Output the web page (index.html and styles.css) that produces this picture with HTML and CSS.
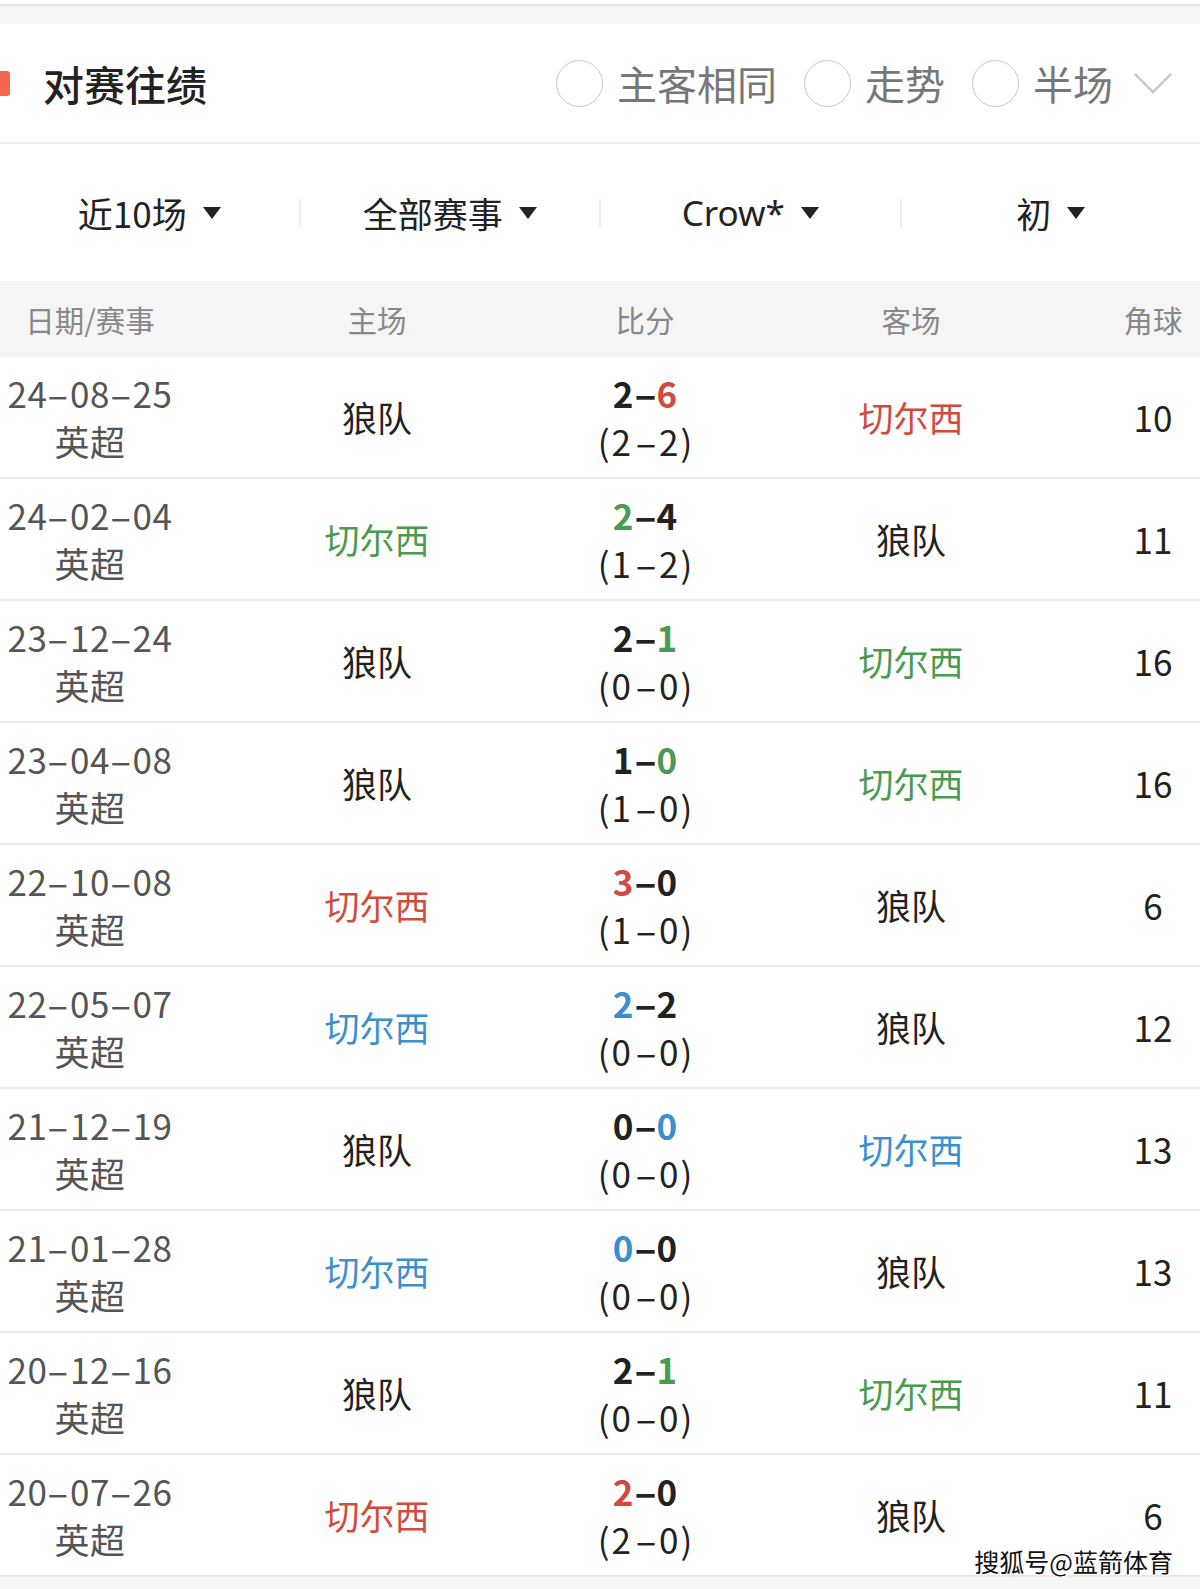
FILE: index.html
```html
<!DOCTYPE html>
<html lang="zh-CN">
<head>
<meta charset="utf-8">
<title>对赛往绩</title>
<link rel="stylesheet" href="styles.css">
</head>
<body>
<div class="page">
  <div class="topbar"></div>

  <header class="section-head">
    <div class="title-wrap">
      <span class="title-mark"></span>
      <h2 class="title">对赛往绩</h2>
    </div>
    <div class="options">
      <span class="radio"></span><span class="opt-label">主客相同</span>
      <span class="radio"></span><span class="opt-label">走势</span>
      <span class="radio"></span><span class="opt-label">半场</span>
      <svg class="chevron" width="40" height="24" viewBox="0 0 40 24"><polyline points="2,3 20,21 38,3" fill="none" stroke="#c4c4c4" stroke-width="2.4"/></svg>
    </div>
  </header>

  <div class="filters">
    <div class="filter">近10场<span class="caret"></span></div>
    <span class="fsep"></span>
    <div class="filter">全部赛事<span class="caret"></span></div>
    <span class="fsep"></span>
    <div class="filter latin">Crow*<span class="caret"></span></div>
    <span class="fsep"></span>
    <div class="filter">初<span class="caret"></span></div>
  </div>

  <div class="thead grid">
    <div>日期/赛事</div>
    <div>主场</div>
    <div>比分</div>
    <div>客场</div>
    <div>角球</div>
  </div>

  <div class="row grid">
    <div class="date"><div>24<span class="d">-</span>08<span class="d">-</span>25</div><div>英超</div></div>
    <div class="team">狼队</div>
    <div class="score"><div class="ft">2<span class="d">-</span><span class="red">6</span></div><div class="ht">(2<span class="d">-</span>2)</div></div>
    <div class="team red">切尔西</div>
    <div class="corner">10</div>
  </div>
  <div class="row grid">
    <div class="date"><div>24<span class="d">-</span>02<span class="d">-</span>04</div><div>英超</div></div>
    <div class="team green">切尔西</div>
    <div class="score"><div class="ft"><span class="green">2</span><span class="d">-</span>4</div><div class="ht">(1<span class="d">-</span>2)</div></div>
    <div class="team">狼队</div>
    <div class="corner">11</div>
  </div>
  <div class="row grid">
    <div class="date"><div>23<span class="d">-</span>12<span class="d">-</span>24</div><div>英超</div></div>
    <div class="team">狼队</div>
    <div class="score"><div class="ft">2<span class="d">-</span><span class="green">1</span></div><div class="ht">(0<span class="d">-</span>0)</div></div>
    <div class="team green">切尔西</div>
    <div class="corner">16</div>
  </div>
  <div class="row grid">
    <div class="date"><div>23<span class="d">-</span>04<span class="d">-</span>08</div><div>英超</div></div>
    <div class="team">狼队</div>
    <div class="score"><div class="ft">1<span class="d">-</span><span class="green">0</span></div><div class="ht">(1<span class="d">-</span>0)</div></div>
    <div class="team green">切尔西</div>
    <div class="corner">16</div>
  </div>
  <div class="row grid">
    <div class="date"><div>22<span class="d">-</span>10<span class="d">-</span>08</div><div>英超</div></div>
    <div class="team red">切尔西</div>
    <div class="score"><div class="ft"><span class="red">3</span><span class="d">-</span>0</div><div class="ht">(1<span class="d">-</span>0)</div></div>
    <div class="team">狼队</div>
    <div class="corner">6</div>
  </div>
  <div class="row grid">
    <div class="date"><div>22<span class="d">-</span>05<span class="d">-</span>07</div><div>英超</div></div>
    <div class="team blue">切尔西</div>
    <div class="score"><div class="ft"><span class="blue">2</span><span class="d">-</span>2</div><div class="ht">(0<span class="d">-</span>0)</div></div>
    <div class="team">狼队</div>
    <div class="corner">12</div>
  </div>
  <div class="row grid">
    <div class="date"><div>21<span class="d">-</span>12<span class="d">-</span>19</div><div>英超</div></div>
    <div class="team">狼队</div>
    <div class="score"><div class="ft">0<span class="d">-</span><span class="blue">0</span></div><div class="ht">(0<span class="d">-</span>0)</div></div>
    <div class="team blue">切尔西</div>
    <div class="corner">13</div>
  </div>
  <div class="row grid">
    <div class="date"><div>21<span class="d">-</span>01<span class="d">-</span>28</div><div>英超</div></div>
    <div class="team blue">切尔西</div>
    <div class="score"><div class="ft"><span class="blue">0</span><span class="d">-</span>0</div><div class="ht">(0<span class="d">-</span>0)</div></div>
    <div class="team">狼队</div>
    <div class="corner">13</div>
  </div>
  <div class="row grid">
    <div class="date"><div>20<span class="d">-</span>12<span class="d">-</span>16</div><div>英超</div></div>
    <div class="team">狼队</div>
    <div class="score"><div class="ft">2<span class="d">-</span><span class="green">1</span></div><div class="ht">(0<span class="d">-</span>0)</div></div>
    <div class="team green">切尔西</div>
    <div class="corner">11</div>
  </div>
  <div class="row grid last">
    <div class="date"><div>20<span class="d">-</span>07<span class="d">-</span>26</div><div>英超</div></div>
    <div class="team red">切尔西</div>
    <div class="score"><div class="ft"><span class="red">2</span><span class="d">-</span>0</div><div class="ht">(2<span class="d">-</span>0)</div></div>
    <div class="team">狼队</div>
    <div class="corner">6</div>
    <span class="watermark">搜狐号@蓝箭体育</span>
  </div>

  <div class="bottombar"></div>
</div>
</body>
</html>
```

FILE: styles.css
```css
* { box-sizing: border-box; }

html, body {
  margin: 0;
  padding: 0;
  background: #ffffff;
}

body {
  font-family: "Noto Sans CJK SC", "Noto Sans", sans-serif;
  color: #222222;
}

.page {
  width: 1200px;
  background: #ffffff;
}

.topbar {
  margin-top: 4px;
  height: 20px;
  border-top: 2px solid #e8e8e8;
  background: #f5f5f5;
}

.section-head {
  height: 120px;
  border-bottom: 2px solid #eeeeee;
  display: flex;
  align-items: center;
  justify-content: space-between;
  padding-right: 27px;
}

.title-wrap {
  display: flex;
  align-items: center;
}

.title-mark {
  width: 10px;
  height: 25px;
  background: #f2674e;
  border-radius: 0 3px 3px 0;
}

.title {
  margin: 0 0 0 33px;
  font-size: 41px;
  font-weight: 500;
  line-height: 1;
  color: #222222;
}

.options {
  display: flex;
  align-items: center;
}

.radio {
  width: 47px;
  height: 47px;
  border: 1.5px solid #c8c8c8;
  border-radius: 50%;
  margin-right: 14px;
}

.opt-label {
  font-size: 40px;
  line-height: 1;
  color: #777777;
  margin-right: 27px;
}

.opt-label:last-of-type {
  margin-right: 20px;
}

.chevron {
  display: block;
}

.filters {
  height: 137px;
  display: flex;
  align-items: center;
}

.filter {
  flex: 1;
  display: flex;
  align-items: center;
  justify-content: center;
  font-size: 35px;
  line-height: 1;
  color: #222222;
}

.filter.latin {
  font-family: "Noto Sans", "Noto Sans CJK SC", sans-serif;
}

.caret {
  width: 0;
  height: 0;
  border-left: 9px solid transparent;
  border-right: 9px solid transparent;
  border-top: 12px solid #222222;
  margin-left: 16px;
}

.fsep {
  width: 2px;
  height: 28px;
  background: #eeeeee;
}

.grid {
  display: grid;
  grid-template-columns: 180px 394px 142px 390px 94px;
  align-items: center;
  text-align: center;
}

.thead {
  height: 76px;
  background: #f5f5f5;
  font-size: 29.5px;
  color: #888888;
}

.row {
  position: relative;
  height: 122px;
  border-bottom: 2px solid #ececec;
  font-size: 35px;
  line-height: 48px;
}

.row.last {
  border-bottom: 2px solid #e6e6e6;
}

.d {
  display: inline-block;
  margin: 0 5px;
  transform: scaleX(1.9);
}

.date {
  color: #555555;
  white-space: nowrap;
  letter-spacing: 0.5px;
}

.team {
  color: #222222;
}

.score {
  white-space: nowrap;
  color: #222222;
}

.score .ft {
  font-weight: 700;
}

.score .ht {
  letter-spacing: 2px;
  text-indent: 2px;
}

.corner {
  color: #222222;
}

.red { color: #d24a3e; }
.green { color: #4a9a50; }
.blue { color: #3b8fcf; }

.watermark {
  position: absolute;
  right: 27px;
  bottom: 1px;
  font-size: 25px;
  font-weight: 400;
  line-height: 1;
  color: #111111;
  text-shadow: 1px 0 0 #fff, -1px 0 0 #fff, 0 1px 0 #fff, 0 -1px 0 #fff, 1px 1px 0 #fff, -1px -1px 0 #fff;
}

.bottombar {
  height: 12px;
  background: #f5f5f5;
}
```
